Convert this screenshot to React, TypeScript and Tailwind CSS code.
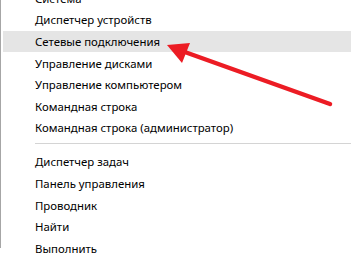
import React from "react";

const GROUP_ONE = [
    "Система",
    "Диспетчер устройств",
    "Сетевые подключения",
    "Управление дисками",
    "Управление компьютером",
    "Командная строка",
    "Командная строка (администратор)",
];

const GROUP_TWO = ["Диспетчер задач", "Панель управления", "Проводник", "Найти", "Выполнить"];

const MenuItem = ({ label, active }: { label: string; active?: boolean }) => (
    <div
        className={`h-[21.6px] flex items-center pl-[32px] text-[11.4px] text-[#000] ${active ? "bg-[#e5e5e5]" : ""}`}
    >
        {label}
    </div>
);

export default function App() {
    return (
        <div className="relative w-[351px] h-[260px] overflow-hidden bg-white font-['Noto_Sans',sans-serif]">
            <div className="h-full border-l border-[#a6a6a6] pl-[2px]">
                <div className="-mt-[12.4px] flex flex-col">
                    {GROUP_ONE.map((label) => (
                        <MenuItem key={label} label={label} active={label === "Сетевые подключения"} />
                    ))}
                    {/* Separator */}
                    <div className="h-[12.4px] pl-[32px] pt-[4px]">
                        <div className="h-px bg-[#d4d4d4]" />
                    </div>
                    {GROUP_TWO.map((label) => (
                        <MenuItem key={label} label={label} />
                    ))}
                </div>
            </div>

            {/* Red annotation arrow */}
            <svg className="absolute inset-0 pointer-events-none" width="351" height="260" viewBox="0 0 351 260">
                <line x1="330" y1="104" x2="182" y2="51" stroke="#ec1c24" strokeWidth="4.5" strokeLinecap="round" />
                <polygon points="167,45 190,43 182,63" fill="#ec1c24" />
            </svg>
        </div>
    );
}
